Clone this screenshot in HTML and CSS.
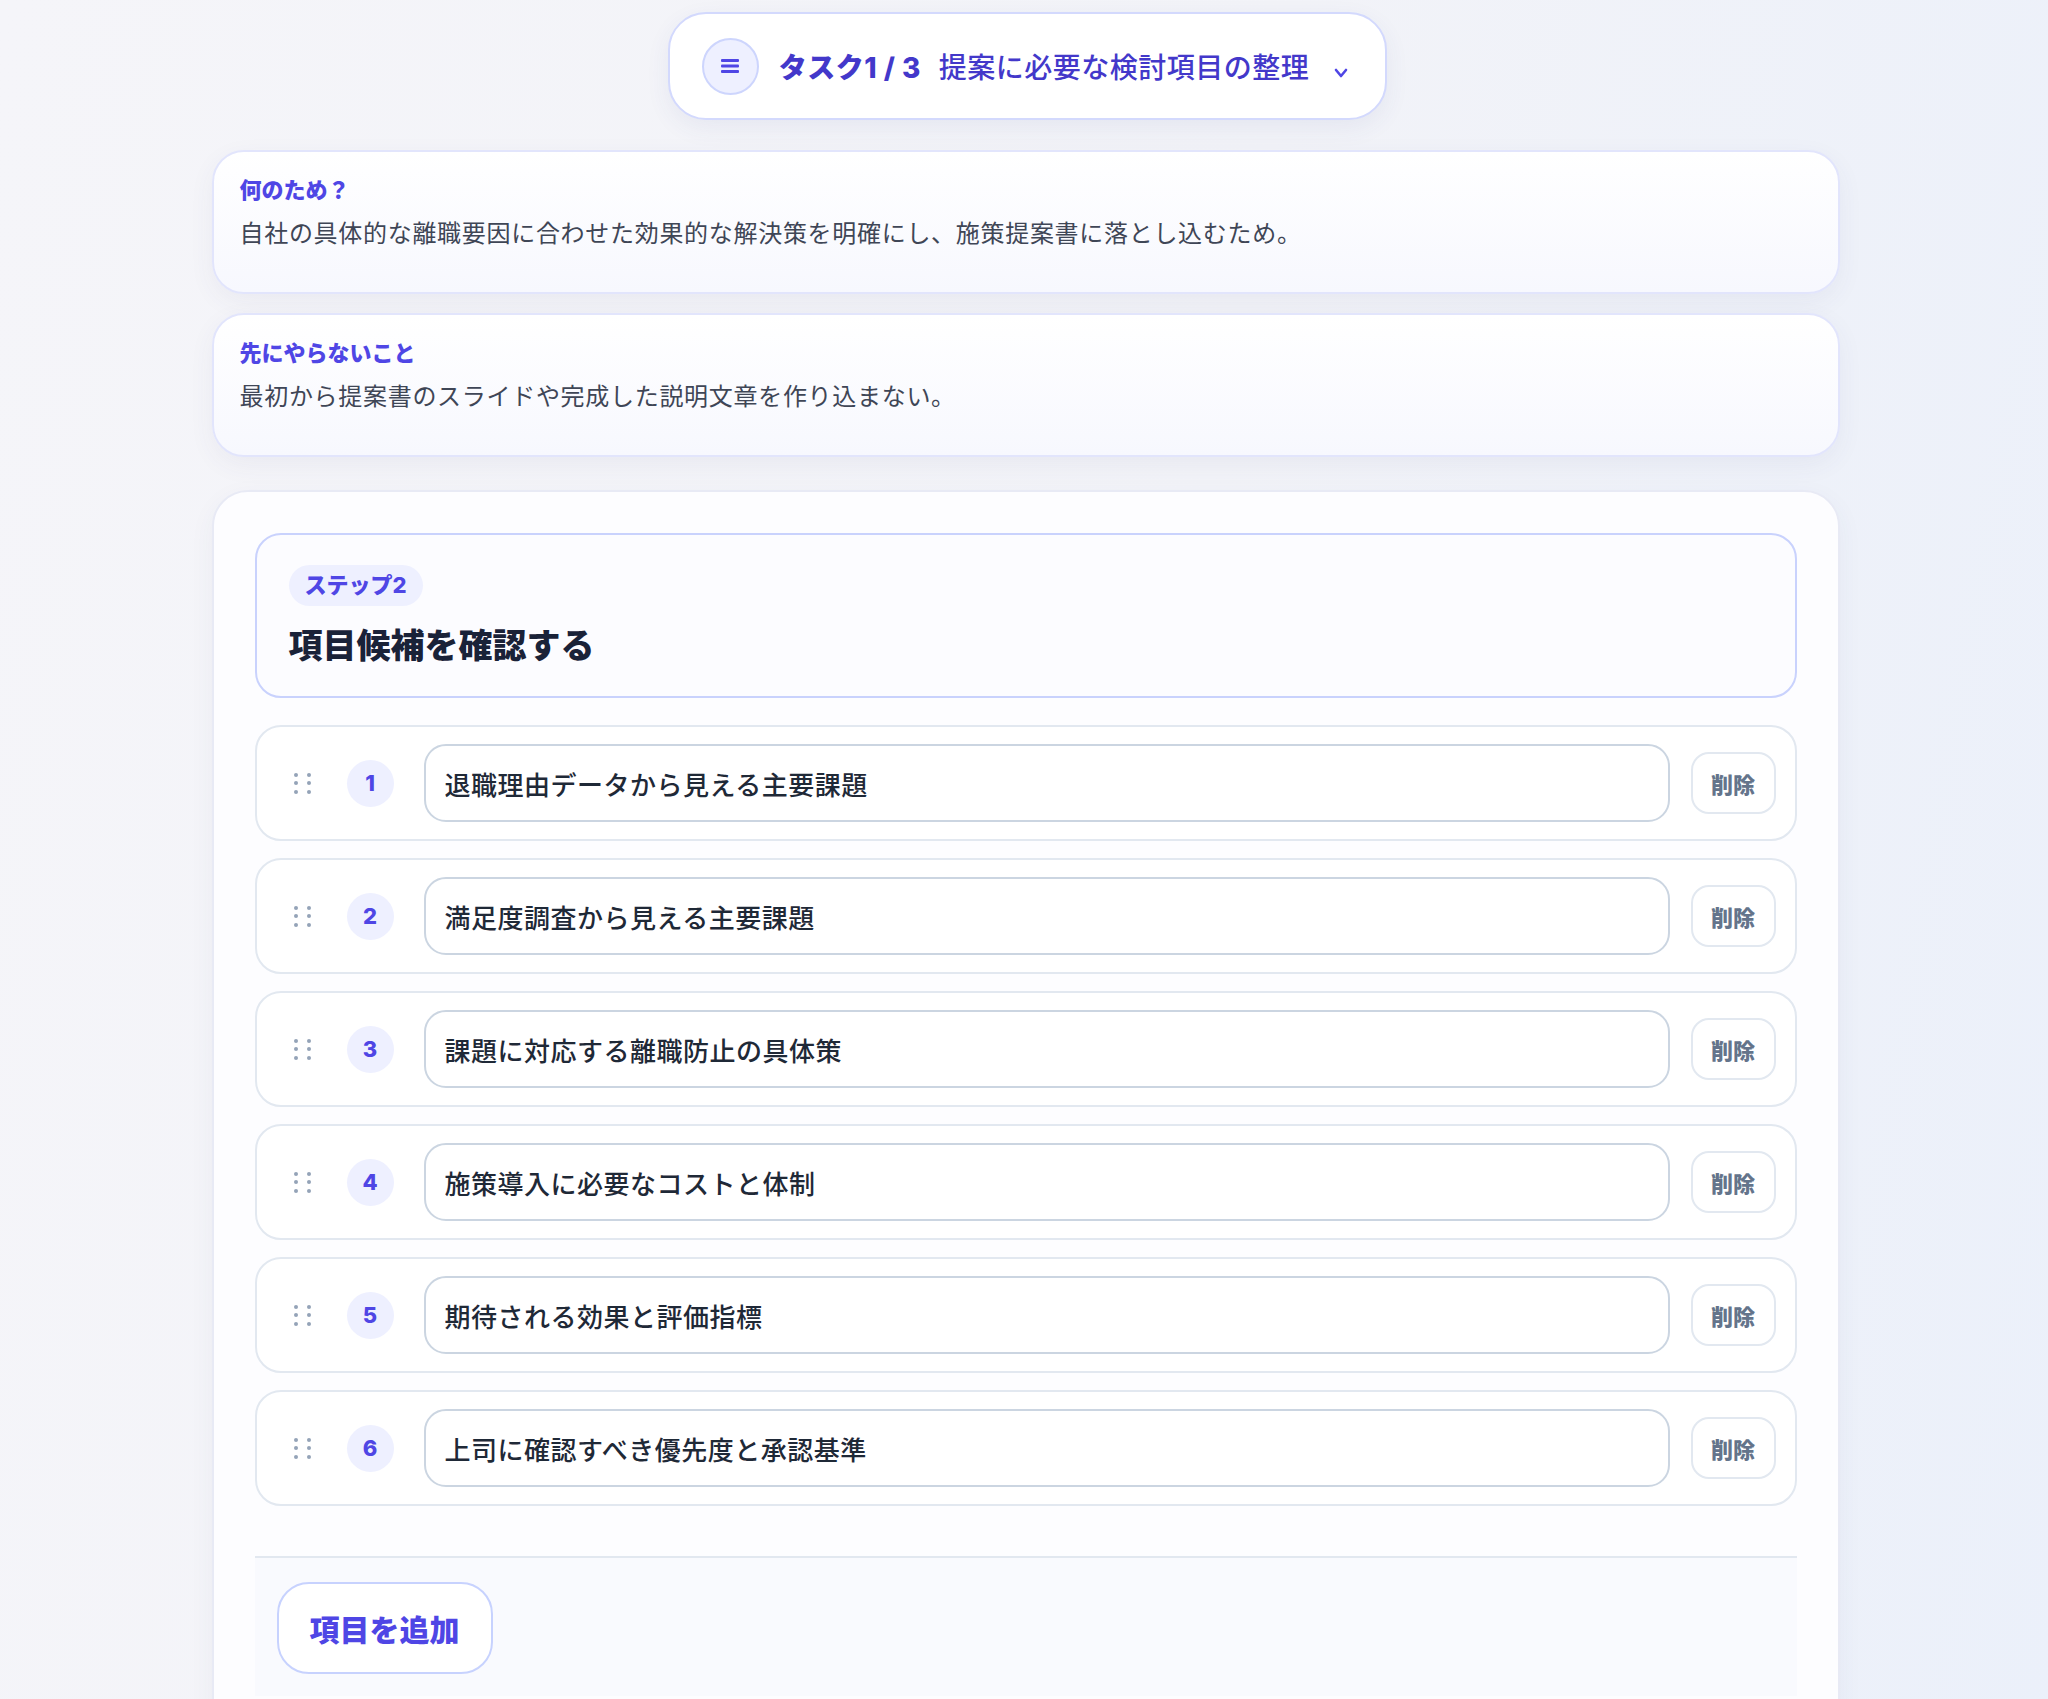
FILE: index.html
```html
<!DOCTYPE html>
<html lang="ja">
<head>
  <meta charset="UTF-8"/>
  <meta name="viewport" content="width=device-width, initial-scale=1.0"/>
  <title>タスク1 / 3 - 提案に必要な検討項目の整理</title>
  <link rel="stylesheet" href="styles.css">
</head>
<body>
  <div class="page">
    <!-- Task switcher -->
    <div class="task-pill">
      <span class="task-icon">
        <svg width="20" height="16" viewBox="0 0 20 16">
          <rect x="1" y="1" width="18" height="3" rx="1" fill="#4f46e5"/>
          <rect x="1" y="6.5" width="18" height="3" rx="1" fill="#4f46e5"/>
          <rect x="1" y="12" width="18" height="3" rx="1" fill="#4f46e5"/>
        </svg>
      </span>
      <span class="task-count">タスク1 / 3</span>
      <span class="task-name">提案に必要な検討項目の整理</span>
      <svg class="task-chevron" width="16" height="12" viewBox="0 0 16 12">
        <path d="M3 3 L8 9 L13 3" fill="none" stroke="#4f46e5" stroke-width="2.6" stroke-linecap="round" stroke-linejoin="round"/>
      </svg>
    </div>

    <div class="note-card note-first">
      <div class="note-title">何のため？</div>
      <div class="note-body">自社の具体的な離職要因に合わせた効果的な解決策を明確にし、施策提案書に落とし込むため。</div>
    </div>

    <div class="note-card">
      <div class="note-title">先にやらないこと</div>
      <div class="note-body">最初から提案書のスライドや完成した説明文章を作り込まない。</div>
    </div>

    <div class="main-card">
      <div class="step-head">
        <span class="step-badge">ステップ2</span>
        <h2 class="step-title">項目候補を確認する</h2>
      </div>

      <div class="item-list">
        <div class="item-row">
          <span class="handle"><i></i><i></i><i></i><i></i><i></i><i></i></span>
          <span class="item-num">1</span>
          <input class="item-input" type="text" value="退職理由データから見える主要課題">
          <button class="item-delete">削除</button>
        </div>
        <div class="item-row">
          <span class="handle"><i></i><i></i><i></i><i></i><i></i><i></i></span>
          <span class="item-num">2</span>
          <input class="item-input" type="text" value="満足度調査から見える主要課題">
          <button class="item-delete">削除</button>
        </div>
        <div class="item-row">
          <span class="handle"><i></i><i></i><i></i><i></i><i></i><i></i></span>
          <span class="item-num">3</span>
          <input class="item-input" type="text" value="課題に対応する離職防止の具体策">
          <button class="item-delete">削除</button>
        </div>
        <div class="item-row">
          <span class="handle"><i></i><i></i><i></i><i></i><i></i><i></i></span>
          <span class="item-num">4</span>
          <input class="item-input" type="text" value="施策導入に必要なコストと体制">
          <button class="item-delete">削除</button>
        </div>
        <div class="item-row">
          <span class="handle"><i></i><i></i><i></i><i></i><i></i><i></i></span>
          <span class="item-num">5</span>
          <input class="item-input" type="text" value="期待される効果と評価指標">
          <button class="item-delete">削除</button>
        </div>
        <div class="item-row">
          <span class="handle"><i></i><i></i><i></i><i></i><i></i><i></i></span>
          <span class="item-num">6</span>
          <input class="item-input" type="text" value="上司に確認すべき優先度と承認基準">
          <button class="item-delete">削除</button>
        </div>
      </div>

      <div class="list-footer">
        <button class="add-button">項目を追加</button>
      </div>
    </div>
  </div>
</body>
</html>
```

FILE: styles.css
```css
body {
  margin: 0;
  font-family: Inter, "Noto Sans CJK JP", sans-serif;
  background: linear-gradient(100deg, #f5f5f9 0%, #f2f3f8 55%, #ebf0fa 100%);
  color: #374151;
  min-height: 100vh;
}
.page {
  width: 1628px;
  margin: 0 auto;
  padding: 12px 0 0 3px;
  display: flex;
  flex-direction: column;
}

/* Task switcher */
.task-pill {
  align-self: center;
  margin-left: 4px;
  display: flex; align-items: center;
  height: 104px;
  padding: 0 36px 0 32px;
  background: #fff;
  border: 2px solid #d3d9fd;
  border-radius: 38px;
  box-shadow: 0 8px 24px rgba(60, 70, 140, 0.07);
}
.task-icon {
  width: 53px; height: 53px;
  border-radius: 50%;
  background: #eef0ff;
  border: 2px solid #cdd5fd;
  display: flex; align-items: center; justify-content: center;
}
.task-count {
  margin-left: 20px;
  font-size: 28px; font-weight: 800;
  color: #4338ca;
  letter-spacing: 0.5px;
}
.task-name {
  margin-left: 18px;
  font-size: 28px; font-weight: 500;
  color: #4338ca;
  letter-spacing: 0.5px;
}
.task-chevron { margin-left: 24px; margin-top: 14px; }

/* Notes */
.note-card {
  margin-top: 19px;
  padding: 23px 26px 40px;
  background: linear-gradient(180deg, #ffffff 0%, #f7f8fe 100%);
  border: 2px solid #e2e5fc;
  border-radius: 32px;
  box-shadow: 0 8px 26px rgba(60, 70, 120, 0.06);
}
.note-first { margin-top: 30px; }
.note-title {
  font-size: 22px; font-weight: 800;
  color: #4f46e5;
  line-height: 30px;
}
.note-body {
  margin-top: 11px;
  font-size: 24px; line-height: 36px;
  color: #3f4656;
  letter-spacing: 0.7px;
}

/* Main card */
.main-card {
  margin-top: 33px;
  padding: 41px 41px 60px;
  background: #fdfdff;
  border: 2px solid #e8eaf5;
  border-radius: 36px;
  box-shadow: 0 8px 26px rgba(60, 70, 120, 0.05);
}
.step-head {
  padding: 30px 32px 27px;
  background: #fcfcff;
  border: 2px solid #c9d2fd;
  border-radius: 26px;
  display: flex; flex-direction: column; align-items: flex-start;
}
.step-badge {
  height: 41px; line-height: 41px;
  padding: 0 16px;
  border-radius: 21px;
  background: #eef0ff;
  color: #4f46e5;
  font-size: 22px; font-weight: 800;
}
.step-title {
  margin: 17px 0 0;
  font-size: 34px; font-weight: 900;
  line-height: 46px;
  color: #1a2238;
}

/* Item rows */
.item-list {
  margin-top: 27px;
  display: flex; flex-direction: column; gap: 17px;
}
.item-row {
  display: flex; align-items: center;
  padding: 17px 19px 17px 37px;
  background: #fff;
  border: 2px solid #e2e8f0;
  border-radius: 26px;
}
.handle {
  display: grid;
  grid-template-columns: 4px 4px;
  column-gap: 9px; row-gap: 4.5px;
}
.handle i {
  width: 4px; height: 4px;
  border-radius: 50%;
  background: #94a3b8;
}
.item-num {
  margin-left: 36px;
  width: 47px; height: 47px;
  border-radius: 50%;
  background: #eef0ff;
  color: #4f46e5;
  font-size: 22px; font-weight: 800;
  display: flex; align-items: center; justify-content: center;
}
.item-input {
  flex: 1;
  margin-left: 30px;
  height: 78px;
  box-sizing: border-box;
  padding: 0 19px;
  border: 2px solid #cbd5e1;
  border-radius: 22px;
  background: #fff;
  font-family: Inter, "Noto Sans CJK JP", sans-serif;
  font-size: 26px; font-weight: 500;
  letter-spacing: 0.5px;
  color: #1f2937;
  outline: none;
}
.item-delete {
  margin-left: 21px;
  width: 85px; height: 62px;
  border: 2px solid #e2e8f0;
  border-radius: 18px;
  background: #fff;
  font-family: "Noto Sans CJK JP", sans-serif;
  font-size: 22px; font-weight: 800;
  color: #64748b;
  cursor: pointer;
}

/* Footer */
.list-footer {
  margin-top: 50px;
  padding: 24px 22px 22px;
  background: #f9fafe;
  border-top: 2px solid #e2e8f0;
}
.add-button {
  height: 92px;
  padding: 0 31px;
  background: #fff;
  border: 2px solid #c7d2fe;
  border-radius: 32px;
  font-family: "Noto Sans CJK JP", sans-serif;
  font-size: 30px; font-weight: 800;
  color: #4f46e5;
  cursor: pointer;
}
```
